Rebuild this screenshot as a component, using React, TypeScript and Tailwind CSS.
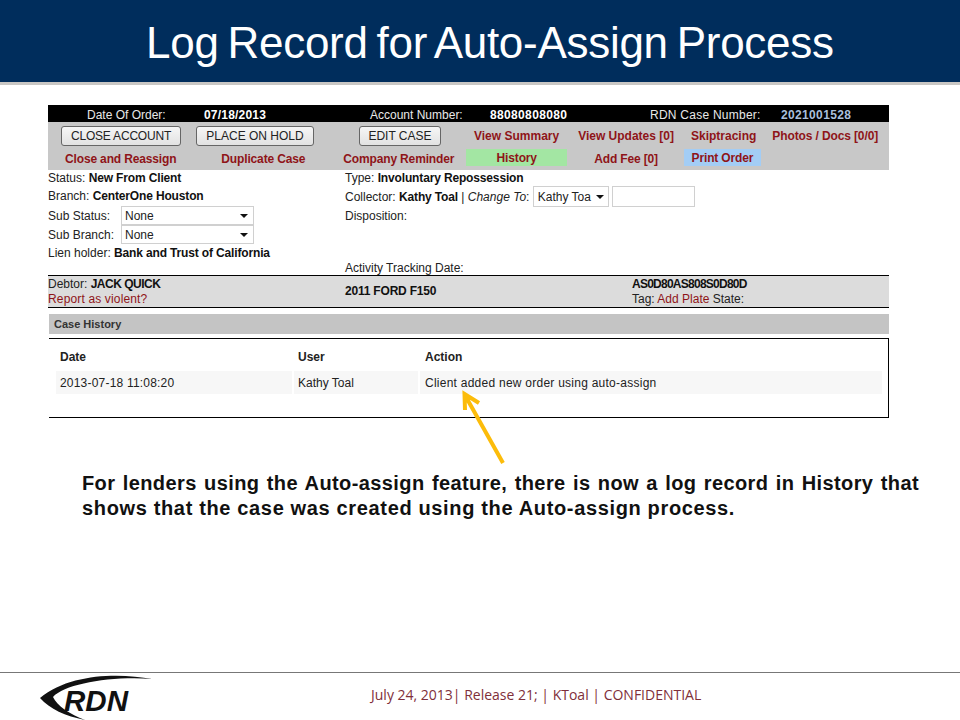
const Caret = () => (
  <span className="w-0 h-0 border-x-[4px] border-x-transparent border-t-[4px] border-t-[#111]"></span>
);

const SlideSelect = ({ value }: { value: string }) => (
  <div className="flex items-center justify-between w-[133px] h-[19px] bg-white border border-[#d0d0d0] pl-[3px] pr-[5px] text-[#222]">
    <span>{value}</span>
    <Caret />
  </div>
);

const RedLink = ({ className, children }: { className: string; children: string }) => (
  <span className={`font-bold text-[#8f1418] whitespace-nowrap ${className}`}>{children}</span>
);

const Strong = ({ children }: { children: string }) => (
  <b className="tracking-[-0.15px] text-[#111]">{children}</b>
);

const Logo = () => (
  <svg viewBox="38 672 116 48" className="w-[116px] h-[48px] ml-[38px]">
    <path
      d="M152 678 C120 672 70 672 40 697 C50 708 65 715 85 719 C70 713 57 705 53 696 C65 683 110 675 152 678 Z"
      fill="#111"
    />
    <text
      x="64"
      y="710"
      textLength="64"
      lengthAdjust="spacingAndGlyphs"
      fontFamily="Liberation Sans"
      fontWeight="700"
      fontStyle="italic"
      fontSize="29"
      fill="#111"
    >
      RDN
    </text>
  </svg>
);

const btn =
  "h-[20px] rounded-[3px] border border-[#666] bg-gradient-to-b from-[#f6f6f6] to-[#e2e2e2] text-[#222]";

const App = () => {
  return (
    <div className="relative w-[960px] h-[720px] bg-white overflow-hidden flex flex-col font-['Liberation_Sans',Arial,sans-serif] text-[12px] text-[#222]">
      <header className="h-[82px] bg-[#002d5c] pl-[146px] pt-[14px] text-white text-[44px] leading-[58px] tracking-[-0.28px] [word-spacing:-3px] whitespace-nowrap">
        Log Record for Auto-Assign Process
      </header>
      <div className="h-[3px] bg-[#c9c7c4]"></div>

      <main className="flex-1 ml-[48px] w-[841px] pt-[20px]">
        <div className="h-[17px] mb-0 border-t-[2px] border-black bg-black flex items-center text-[#e8e8e8] whitespace-nowrap">
          <span className="ml-[39px] w-[117px]">Date Of Order:</span>
          <span className="w-[166px] tracking-[0.2px] font-bold text-white">07/18/2013</span>
          <span className="w-[120px]">Account Number:</span>
          <span className="w-[160px] tracking-[0.35px] font-bold text-white">88080808080</span>
          <span className="w-[131px] tracking-[0.25px]">RDN Case Number:</span>
          <span className="tracking-[0.35px] font-bold text-[#a9bfdc]">2021001528</span>
        </div>

        <div className="h-[48px] bg-[#c8c8c8]">
          <div className="h-[26px] flex items-center pt-[1px]">
            <button className={`ml-[13px] w-[120px] tracking-[-0.2px] ${btn}`}>CLOSE ACCOUNT</button>
            <button className={`ml-[15px] w-[118px] ${btn}`}>PLACE ON HOLD</button>
            <button className={`ml-[45px] w-[82px] ${btn}`}>EDIT CASE</button>
            <RedLink className="ml-[33px]">View Summary</RedLink>
            <RedLink className="ml-[19px]">View Updates [0]</RedLink>
            <RedLink className="ml-[17px]">Skiptracing</RedLink>
            <RedLink className="ml-[16px] tracking-[-0.12px]">Photos / Docs [0/0]</RedLink>
          </div>
          <div className="h-[22px] flex items-center tracking-[-0.15px]">
            <RedLink className="ml-[17px]">Close and Reassign</RedLink>
            <RedLink className="ml-[45px]">Duplicate Case</RedLink>
            <RedLink className="ml-[38px]">Company Reminder</RedLink>
            <div className="ml-[12px] w-[101px] h-[17px] mb-[3px] bg-[#a3e6a3] flex items-center justify-center">
              <RedLink className="">History</RedLink>
            </div>
            <RedLink className="ml-[27px]">Add Fee [0]</RedLink>
            <div className="ml-[26px] w-[77px] h-[17px] mb-[3px] bg-[#a3cdf5] flex items-center justify-center">
              <RedLink className="">Print Order</RedLink>
            </div>
          </div>
        </div>

        <div className="flex h-[105px]">
          <div className="w-[297px]">
            <div className="h-[17px] leading-[17px]">Status: <Strong>New From Client</Strong></div>
            <div className="h-[18px] leading-[18px]">Branch: <Strong>CenterOne Houston</Strong></div>
            <div className="mt-[1px] h-[19px] flex items-center">
              <span className="w-[73px]">Sub Status:</span>
              <SlideSelect value="None" />
            </div>
            <div className="h-[19px] flex items-center">
              <span className="w-[73px]">Sub Branch:</span>
              <SlideSelect value="None" />
            </div>
            <div className="h-[18px] leading-[18px]">Lien holder: <Strong>Bank and Trust of California</Strong></div>
          </div>
          <div className="flex-1">
            <div className="h-[16px] leading-[17px]">Type: <Strong>Involuntary Repossession</Strong></div>
            <div className="h-[21px] flex items-center whitespace-pre">
              <span>Collector: <Strong>Kathy Toal</Strong> | <i>Change To</i>: </span>
              <div className="w-[76px] h-[21px] flex items-center justify-between bg-white border border-[#d0d0d0] pl-[4px] pr-[4px]">
                <span>Kathy Toa</span>
                <Caret />
              </div>
              <div className="ml-[3px] w-[83px] h-[21px] bg-white border border-[#d0d0d0]"></div>
            </div>
            <div className="h-[18px] leading-[18px]">Disposition:</div>
            <div className="mt-[35px] h-[15px] leading-[16px]">Activity Tracking Date:</div>
          </div>
        </div>

        <div className="h-[33px] flex bg-[#dcdcdc] border-y border-black leading-[15px]">
          <div className="w-[297px] pt-[1px]">
            <div>Debtor: <b className="tracking-[-0.5px] text-[#111]">JACK QUICK</b></div>
            <div className="tracking-[0.15px] text-[#8f1418]">Report as violent?</div>
          </div>
          <div className="w-[287px] flex items-center tracking-[-0.2px] font-bold text-[#111]">2011 FORD F150</div>
          <div className="pt-[1px]">
            <div className="tracking-[-0.75px] font-bold text-[#111]">AS0D80AS808S0D80D</div>
            <div>Tag: <span className="text-[#8f1418]">Add Plate</span> State:</div>
          </div>
        </div>

        <div className="mt-[6px] ml-[1px] h-[20px] pl-[5px] bg-[#c4c4c4] flex items-center text-[11px] font-bold text-[#333]">Case History</div>

        <div className="mt-[4px] ml-[1px] h-[80px] border-y border-r border-black pl-[7px] pt-[6px]">
          <div className="flex h-[26px] pb-[3px] items-center font-bold text-[#222]">
            <span className="ml-[4px] w-[238px]">Date</span>
            <span className="w-[127px]">User</span>
            <span>Action</span>
          </div>
          <div className="flex gap-[2px] h-[23px] text-[#222]">
            <div className="w-[236px] bg-[#f7f7f7] pl-[4px] flex items-center tracking-[0.2px]">2013-07-18 11:08:20</div>
            <div className="w-[124px] bg-[#f7f7f7] pl-[4px] flex items-center">Kathy Toal</div>
            <div className="w-[462px] bg-[#f7f7f7] pl-[5px] flex items-center tracking-[0.25px]">Client added new order using auto-assign</div>
          </div>
        </div>

        <div className="mt-[53px] ml-[34px] w-[837px] text-[20px] leading-[25px] font-bold text-[#111]">
          <p className="tracking-[0.4px] text-justify [text-align-last:justify]">
            For lenders using the Auto-assign feature, there is now a log record in History that
          </p>
          <p className="tracking-[0.65px]">shows that the case was created using the Auto-assign process.</p>
        </div>
      </main>

      <footer className="h-[48px] border-t border-[#777] flex relative">
        <Logo />
        <div className="ml-[217px] mt-[11px] font-['Open_Sans',sans-serif] text-[14px] text-[#7f2f3a] whitespace-nowrap">
          July 24, 2013| Release 21; | KToal | CONFIDENTIAL
        </div>
      </footer>

      <svg className="absolute left-[455px] top-[385px] w-[60px] h-[85px]" viewBox="455 385 60 85">
        <path d="M503 463 L466 397 M465 410 L464.5 394 L479 403" fill="none" stroke="#fcbc0a" strokeWidth="4" />
      </svg>
    </div>
  );
};

export default App;
